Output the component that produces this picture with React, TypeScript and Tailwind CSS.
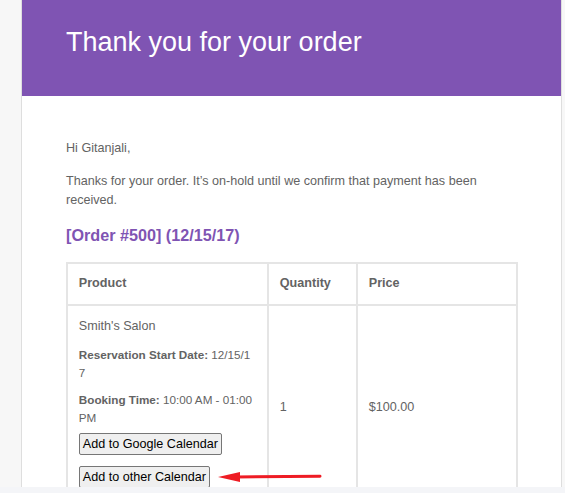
import React from "react";

export default function App() {
  return (
    <div className="relative flex h-[493px] w-[565px] flex-col overflow-hidden bg-[#f7f7f7] font-['Liberation_Sans',Arial,sans-serif]">
      <div className="flex h-[487px] shrink-0 overflow-hidden">
        <div className="w-[21px] shrink-0" />
        <div className="w-[541px] shrink-0 border-x border-[#dedede] bg-white">
          <div className="h-[96px] bg-[#7f54b3] pl-[44px] pt-[22px]">
            <h1 className="text-[27px] font-normal leading-[40px] text-white">Thank you for your order</h1>
          </div>
          <div className="pl-[44px] pr-[43px] pt-[43px] text-[#636363]">
            <p className="mb-[14.4px] text-[12.6px] leading-[18.9px]">Hi Gitanjali,</p>
            <p className="mb-[14.4px] text-[12.6px] leading-[18.9px]">
              Thanks for your order. It’s on-hold until we confirm that payment has been received.
            </p>
            <h2 className="mb-[16.2px] text-[16.2px] font-bold leading-[21px] text-[#7f54b3]">[Order #500] (12/15/17)</h2>
            <div className="border border-[#e5e5e5] text-[12.6px] leading-[18.9px]">
              <div className="flex font-bold">
                <div className="w-[201px] shrink-0 border border-[#e5e5e5] p-[10.8px]">Product</div>
                <div className="w-[89px] shrink-0 border border-[#e5e5e5] p-[10.8px]">Quantity</div>
                <div className="w-[160px] shrink-0 border border-[#e5e5e5] p-[10.8px]">Price</div>
              </div>
              <div className="flex">
                <div className="w-[201px] shrink-0 border border-[#e5e5e5] px-[10.8px] pb-[21px] pt-[10.8px]">
                  <div>Smith's Salon</div>
                  <div className="mt-[10px] text-[11.7px] leading-[18px]">
                    <strong>Reservation Start Date:</strong> <span className="break-all">12/15/17</span>
                  </div>
                  <div className="mt-[9px] text-[11.7px] leading-[18px]">
                    <strong>Booking Time:</strong> 10:00 AM - 01:00 PM
                  </div>
                  <div className="mt-[6px]">
                    <button className="h-[22px] rounded-[2px] border border-[#767676] bg-[#efefef] px-[3px] text-[12.6px] leading-[14px] text-black">
                      Add to Google Calendar
                    </button>
                  </div>
                  <div className="mt-[11px]">
                    <button className="h-[22px] rounded-[2px] border border-[#767676] bg-[#efefef] px-[3px] text-[12.6px] leading-[14px] text-black">
                      Add to other Calendar
                    </button>
                  </div>
                </div>
                <div className="flex w-[89px] shrink-0 items-center border border-[#e5e5e5] p-[10.8px]">1</div>
                <div className="flex w-[160px] shrink-0 items-center border border-[#e5e5e5] p-[10.8px]">$100.00</div>
              </div>
            </div>
          </div>
        </div>
      </div>
      <div className="h-[6px] shrink-0 bg-[#f4f5f8]" />
      <svg className="absolute left-[214px] top-[469px]" width="110" height="16" viewBox="0 0 110 16">
        <polygon points="4,8 26,3 26,13" fill="#ee1c24" />
        <line x1="22" y1="8" x2="106" y2="7.2" stroke="#ee1c24" strokeWidth="3" strokeLinecap="round" />
      </svg>
    </div>
  );
}
